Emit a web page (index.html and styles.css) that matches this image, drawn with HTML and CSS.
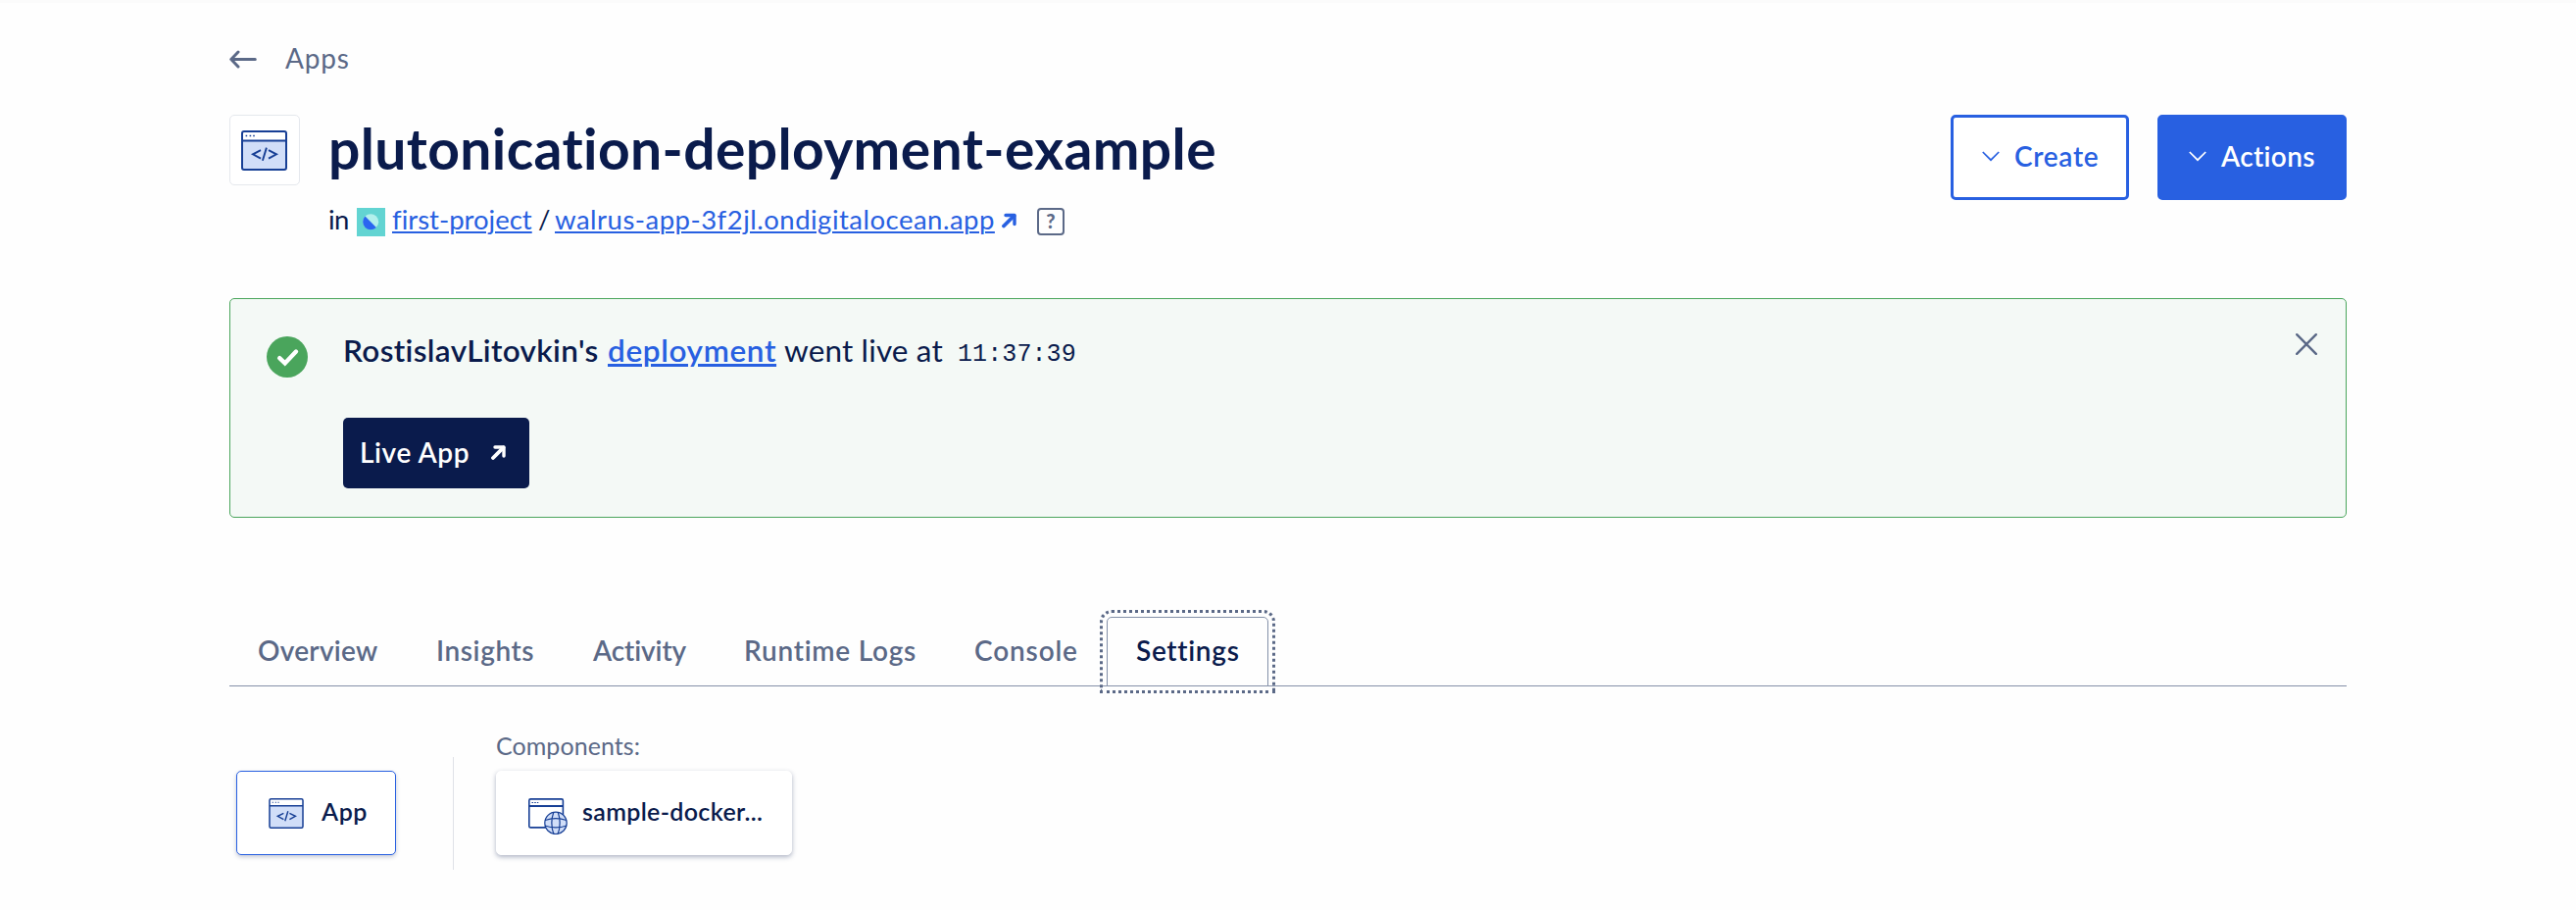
FILE: index.html
```
<!DOCTYPE html>
<html lang="en">
<head>
<meta charset="utf-8">
<title>plutonication-deployment-example</title>
<link rel="stylesheet" href="styles.css">
</head>
<body>
<svg class="defs" width="0" height="0" aria-hidden="true">
  <symbol id="app-window" viewBox="0 0 47 41">
    <rect x="1" y="1" width="45" height="39" rx="2" fill="#fff"/>
    <path d="M1 10.5h45V38a2 2 0 0 1-2 2H3a2 2 0 0 1-2-2z" fill="#d1def8"/>
    <rect x="1" y="1" width="45" height="39" rx="2" fill="none" stroke="#173f95" stroke-width="2"/>
    <path d="M1 10.4h45" stroke="#173f95" stroke-width="2"/>
    <path d="M4.6 5.5h1.6M8.6 5.5h1.6M12.2 5.5h1.6" stroke="#173f95" stroke-width="1.4"/>
    <path d="M20 20.2l-8 4.1 8 4.3M28 20.2l8 4.1-8 4.3M25.9 17.6l-4 13.2" fill="none" stroke="#173f95" stroke-width="1.9"/>
  </symbol>
  <symbol id="arrow-out" viewBox="0 0 15 15">
    <path d="M2 13L12.5 2.5" fill="none" stroke="currentColor" stroke-width="3.8" stroke-linecap="round"/>
    <path d="M4 2h9v9" fill="none" stroke="currentColor" stroke-width="3.4" stroke-linecap="round" stroke-linejoin="round"/>
  </symbol>
</svg>
<main class="page">
  <nav class="back">
    <svg width="28" height="19" viewBox="0 0 28 19" fill="none" stroke="#5b6987" stroke-width="3" stroke-linecap="round" stroke-linejoin="round"><path d="M26.3 9.500H2M9 2L1.800 9.500 9 17"/></svg>
    <a class="back-label">Apps</a>
  </nav>

  <header class="header">
    <div class="app-icon"><svg width="47" height="41"><use href="#app-window"/></svg></div>
    <div class="heading">
      <h1 class="title">plutonication-deployment-example</h1>
      <div class="meta">
        <span class="in">in</span>
        <svg class="project-icon" width="29" height="29" viewBox="0 0 29 29"><rect width="29" height="29" fill="#62d4d2"/><circle cx="14.2" cy="14.2" r="8" fill="#b2f0ec"/><path d="M8.500 8.500a8 8 0 1 0 11.400 11.400z" fill="#2b66f0"/></svg>
        <a class="link project">first-project</a>
        <span class="slash">/</span>
        <a class="link url">walrus-app-3f2jl.ondigitalocean.app</a>
        <svg class="url-arrow" width="15" height="16"><use href="#arrow-out"/></svg>
        <span class="help">?</span>
      </div>
    </div>
    <div class="buttons">
      <button class="btn btn-create"><svg width="18" height="11" viewBox="0 0 18 11"><path d="M.8 1L9 9.2 17.2 1" fill="none" stroke="currentColor" stroke-width="1.7"/></svg><span class="create-label">Create</span></button>
      <button class="btn btn-actions"><svg width="18" height="11" viewBox="0 0 18 11"><path d="M.8 1L9 9.2 17.2 1" fill="none" stroke="currentColor" stroke-width="1.7"/></svg><span class="actions-label">Actions</span></button>
    </div>
  </header>

  <section class="alert">
    <svg class="check" width="42" height="42" viewBox="0 0 42 42"><circle cx="21" cy="21" r="21" fill="#4aa55c"/><path d="M13.2 22.2l5.500 5.200L30 15.500" fill="none" stroke="#fff" stroke-width="4.400" stroke-linecap="round" stroke-linejoin="miter"/></svg>
    <div class="alert-body">
      <p class="message"><b class="user">RostislavLitovkin's</b><a class="deploy">deployment</a><span class="went">went live at</span><code class="time">11:37:39</code></p>
      <a class="live"><span class="live-label">Live App</span><svg width="15" height="15"><use href="#arrow-out"/></svg></a>
    </div>
    <svg class="close" width="22" height="22" viewBox="0 0 22 22"><path d="M1.2 1.2l19.6 19.6M20.8 1.2L1.2 20.8" stroke="#5b6987" stroke-width="2.4" stroke-linecap="round"/></svg>
  </section>

  <nav class="tabs">
    <a class="tab overview">Overview</a>
    <a class="tab insights">Insights</a>
    <a class="tab activity">Activity</a>
    <a class="tab logs">Runtime Logs</a>
    <a class="tab console">Console</a>
    <a class="tab active">Settings</a>
  </nav>

  <section class="components">
    <a class="card card-app"><svg width="36" height="31"><use href="#app-window"/></svg><span class="app-name">App</span></a>
    <div class="divider"></div>
    <div class="component-list">
      <div class="list-label">Components:</div>
      <a class="card card-service">
        <svg width="40" height="37" viewBox="0 0 40 37" fill="none" stroke="#173f95">
          <rect x=".8" y=".9" width="34.6" height="29" rx="1.5" fill="#fff" stroke-width="1.6"/>
          <path d="M1 8h34" stroke-width="1.8"/>
          <path d="M3.5 4.5h1.6M6.2 4.5h1.6M8.9 4.5h1.4" stroke-width="1.1"/>
          <circle cx="28" cy="25.3" r="11.2" fill="#d1def8" stroke-width="1.2"/>
          <path d="M25.800 14.200c-2.500 7-2.500 15.200 0 22.200M30.200 14.200c2.500 7 2.500 15.200 0 22.200M17 22.500c7-2.400 15-2.400 22 0M17 28c7 2.400 15 2.400 22 0" stroke-width="1.2"/>
        </svg>
        <span class="service-name">sample-docker...</span>
      </a>
    </div>
  </section>
</main>
</body>
</html>
```
FILE: styles.css
```
* { box-sizing: border-box; }
body {
  margin: 0;
  min-height: 928px;
  background: #fefefe;
  color: #0a1b4c;
  font-family: Lato, "Open Sans", sans-serif;
  font-size: 27.5px;
  font-variant-ligatures: none;
  border-top: 3px solid #fbfbfb;
}
a { white-space: nowrap; }
.defs { display: block; height: 0; }
svg { display: block; flex: none; }
.page { width: 2160px; margin: 0 auto; padding-top: 38px; }

.back { display: flex; align-items: center; gap: 29px; height: 38px; color: #5b6987; font-size: 28px; line-height: 36px; }
.back svg { margin-top: 1px; }
.back-label { letter-spacing: .8px; margin-top: -2px; }

.header { display: flex; align-items: flex-start; height: 187px; margin-top: 38px; }
.app-icon {
  width: 72px; height: 72px; flex: none;
  display: flex; align-items: center; justify-content: center;
  border: 1px solid #e5e8ed; border-radius: 5px; background: #fff;
}
.app-icon svg { margin-right: 2px; }
.heading { margin: -2px 0 0 29px; }
.title { margin: 0; font-size: 57px; line-height: 72px; font-weight: 700; letter-spacing: .38px; white-space: nowrap; }
.meta { display: flex; height: 36px; margin-top: 19px; line-height: 36px; white-space: nowrap; }
.in { width: 29px; letter-spacing: -.5px; }
.project-icon { margin: 6px 7px 0 0; }
.link { color: #2860e1; text-decoration: underline; text-decoration-thickness: 2px; text-underline-offset: 2px; }
.project { width: 143px; letter-spacing: 0; }
.slash { width: 23px; padding-left: 6px; }
.url { width: 449px; letter-spacing: .49px; }
.url-arrow { margin: 11px 0 0 7px; color: #2860e1; }
.help {
  width: 28px; height: 28px; margin: 6px 0 0 21px;
  border: 2px solid #5b6987; border-radius: 4px;
  color: #5b6987; font: 900 20px/23px Lato, sans-serif; text-align: center;
}

.buttons { display: flex; gap: 29px; margin-left: auto; }
.btn {
  display: flex; align-items: center; height: 87px; padding: 0 0 0 29px;
  border: 3px solid #2860e1; border-radius: 5px;
  font: 600 28px/36px Lato, sans-serif; text-align: left;
}
.btn svg { margin: -3px 15px 0 0; }
.btn span { margin-top: -4px; }
.btn-create { width: 182px; background: #fff; color: #2860e1; }
.btn-actions { width: 193px; background: #2860e1; color: #fff; }
.create-label { letter-spacing: .7px; }
.actions-label { letter-spacing: .35px; }

.alert {
  display: flex; align-items: flex-start; height: 224px; padding: 38px 29px 0 37px;
  border: 1px solid #4aa55c; border-radius: 5px; background: #f4f9f6;
}
.alert-body { margin-left: 36px; flex: 1; }
.message { display: flex; height: 42px; margin: -7px 0 0; font-size: 31.5px; line-height: 42px; white-space: nowrap; }
.user { width: 270px; font-weight: 600; letter-spacing: .35px; }
.deploy { width: 180px; font-weight: 600; letter-spacing: .64px; color: #2860e1; text-decoration: underline; text-decoration-thickness: 3px; text-underline-offset: 2px; }
.went { width: 177px; letter-spacing: .15px; }
.time { font: 25px/52px "Liberation Mono", monospace; letter-spacing: .1px; }
.live {
  display: flex; align-items: center; width: 190px; height: 72px; margin-top: 48px; padding-left: 17px;
  border-radius: 5px; background: #0a1b4c; color: #fff; font-size: 28px; font-weight: 600; line-height: 36px;
}
.live-label { width: 134px; margin-top: -3px; letter-spacing: .6px; }
.live svg { margin-top: -2px; }
.close { margin-top: -3px; }

.tabs { display: flex; height: 71px; margin-top: 101px; border-bottom: 1px solid #8490a9; }
.tab { height: 70px; padding: 16px 0 0 29px; color: #5b6987; font-size: 28px; font-weight: 600; line-height: 36px; }
.overview { width: 181px; letter-spacing: .25px; }
.insights { width: 160px; padding-left: 30px; letter-spacing: .6px; }
.activity { width: 154px; padding-left: 30px; letter-spacing: -.1px; }
.logs { width: 235px; padding-left: 30px; letter-spacing: .75px; }
.console { width: 165px; padding-left: 30px; letter-spacing: .85px; }
.active {
  width: 165px; height: 71px; padding-top: 15px; letter-spacing: .7px; color: #0a1b4c; background: #fefefe;
  border: 1px solid #8490a9; border-radius: 5px 5px 0 0;
  outline: 3px dotted #5b6987; outline-offset: 4px;
}

.components { display: flex; align-items: flex-start; padding: 43px 0 0 7px; font-size: 25px; line-height: 34px; }
.card {
  display: flex; align-items: center; height: 86px;
  border: 1px solid #fff; border-radius: 5px; background: #fff;
  box-shadow: 0 2px 5px rgba(27, 43, 90, .35); font-weight: 600;
}
.card-app { width: 163px; margin-top: 43px; padding-left: 32px; border-color: #2860e1; box-shadow: 0 2px 4px rgba(27, 43, 90, .25); }
.app-name { margin: -4px 0 0 18px; letter-spacing: .5px; }
.divider { width: 1px; height: 115px; margin: 29px 43px 0 58px; background: #dfe2e8; }
.component-list { display: flex; flex-direction: column; }
.list-label { height: 43px; color: #5b6987; letter-spacing: .06px; }
.card-service { width: 302px; padding-left: 32px; }
.card-service svg { margin-top: 6px; }
.service-name { margin: -4px 0 0 15px; letter-spacing: .33px; }
```
